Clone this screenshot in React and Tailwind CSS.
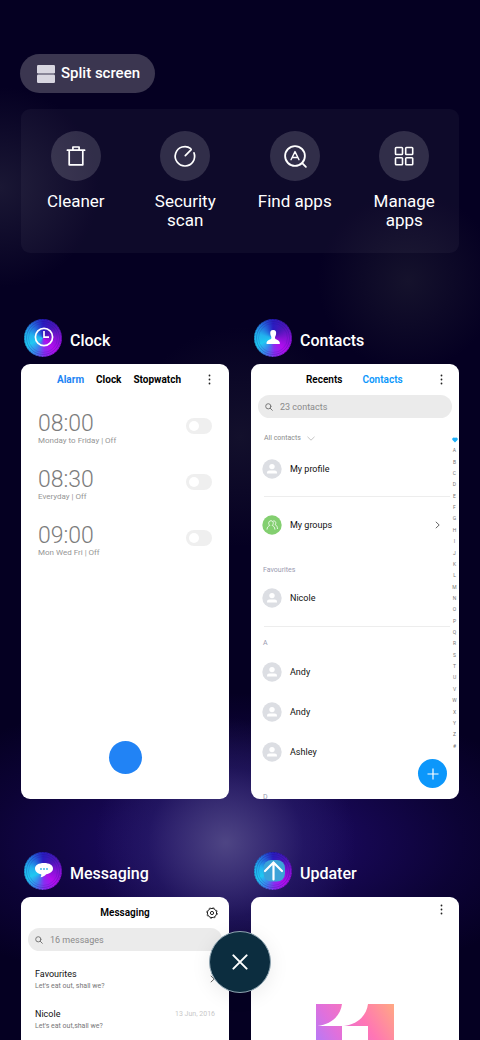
import React from 'react';

const INDEX = 'ABCDEFGHIJKLMNOPQRSTUVWXYZ#'.split('');

function Dots() {
  return (
    <svg viewBox="0 0 3 11" className="h-[11px] w-[3px] fill-[#222]">
      <circle cx="1.5" cy="1.5" r="0.9" />
      <circle cx="1.5" cy="5.5" r="0.9" />
      <circle cx="1.5" cy="9.5" r="0.9" />
    </svg>
  );
}

function TrashIcon() {
  return (
    <svg viewBox="0 0 24 24" className="size-6 fill-none stroke-white stroke-[1.7]" strokeLinejoin="round" strokeLinecap="round">
      <path d="M3.4 6.2H20.6M5.2 6.2V20.8H18.8V6.2M8.9 6V3H15.1V6" />
    </svg>
  );
}

function ScanIcon() {
  return (
    <svg viewBox="0 0 24 24" className="size-6 fill-none stroke-white stroke-[1.7]" strokeLinecap="round">
      <path d="M17.8 4.6A9.7 9.7 0 1 0 21 8.9M12.3 11.7L18.2 5.6" />
    </svg>
  );
}

function FindIcon() {
  return (
    <svg viewBox="0 0 24 24" className="size-6 overflow-visible fill-none stroke-white stroke-[1.8]" strokeLinecap="round" strokeLinejoin="round">
      <circle cx="12" cy="12" r="9.9" />
      <path d="M19.2 19.2L22.9 22.9" />
      <path d="M8 15.7L12 7.6L16 15.7M9.5 13.5H14.5" strokeWidth="1.4" />
    </svg>
  );
}

function GridIcon() {
  return (
    <svg viewBox="0 0 24 24" className="size-6 fill-none stroke-white stroke-[1.6]">
      <rect x="3.5" y="3.5" width="7" height="7" rx="0.8" />
      <rect x="13.7" y="3.5" width="7" height="7" rx="0.8" />
      <rect x="3.5" y="13.7" width="7" height="7" rx="0.8" />
      <rect x="13.7" y="13.7" width="7" height="7" rx="0.8" />
    </svg>
  );
}

function Tool({ icon, label }) {
  return (
    <button type="button" className="flex flex-col items-center px-2">
      <span className="flex size-[50px] items-center justify-center rounded-full bg-white/15">{icon}</span>
      <span className="mt-[11px] text-[17px] leading-[19px]">{label}</span>
    </button>
  );
}

function Badge({ children }) {
  return (
    <span className="flex size-[38px] shrink-0 items-center justify-center rounded-full bg-[conic-gradient(from_0deg,#2a1cc0,#4a16b8_45deg,#8412d4_90deg,#b00eee_135deg,#8a2cf0_175deg,#3f7eec_205deg,#1fc8f2_245deg,#22b0ee_285deg,#2464dc_325deg,#2a1cc0)]">
      <svg viewBox="0 0 38 38" className="size-[38px] fill-none">
        <circle cx="19" cy="19" r="18.5" stroke="#0a0440" strokeOpacity="0.3" strokeDasharray="2 1" />
        <circle cx="19" cy="19" r="16.5" stroke="#1a1080" strokeOpacity="0.25" />
        <circle cx="19" cy="19" r="14.5" stroke="#1a1080" strokeOpacity="0.15" />
        {children}
      </svg>
    </span>
  );
}

function AppWindow({ name, badge, children }) {
  return (
    <section className="min-w-0">
      <header className="flex items-center gap-2 pb-[7px] pl-[3px]">
        <Badge>{badge}</Badge>
        <h2 className="pt-[5px] text-base leading-5 font-medium">{name}</h2>
      </header>
      <div className="relative flex aspect-[208/435] flex-col overflow-hidden rounded-[9px] bg-white text-black">
        {children}
      </div>
    </section>
  );
}

function SearchField({ label }) {
  return (
    <label className="mx-[7px] flex h-[23px] shrink-0 items-center gap-[7px] rounded-full bg-[#ebebeb] px-[7px]">
      <svg viewBox="0 0 8 8" className="size-2 shrink-0 fill-none stroke-[#777]" strokeLinecap="round">
        <circle cx="3.3" cy="3.3" r="2.6" />
        <path d="M5.3 5.3L7.3 7.3" />
      </svg>
      <input type="text" aria-label={label} placeholder={label} className="w-full min-w-0 bg-transparent text-[9px] leading-3 outline-none placeholder:text-[#8a8a8a]" />
    </label>
  );
}

const ALARMS = [
  ['08:00', 'Monday to Friday | Off'],
  ['08:30', 'Everyday | Off'],
  ['09:00', 'Mon Wed Fri | Off'],
];

function ClockScreen() {
  return (
    <>
      <nav className="flex h-[31px] shrink-0 items-center pr-[18px] pl-9 text-[10px] font-bold">
        <button type="button" className="text-[#2183f5]">Alarm</button>
        <button type="button" className="ml-3">Clock</button>
        <button type="button" className="ml-3">Stopwatch</button>
        <button type="button" aria-label="More" className="ml-auto"><Dots /></button>
      </nav>
      <ul className="flex flex-col gap-[22px] px-[17px] pt-[17px]">
        {ALARMS.map(([time, info]) => (
          <li key={time} className="flex items-center justify-between">
            <div>
              <div className="text-[23px] leading-6 font-light text-[#7c7c7c]">{time}</div>
              <div className="text-[8px] leading-[10px] text-[#959595]">{info}</div>
            </div>
            <label className="mb-1.5 flex h-4 w-[26px] items-center rounded-full bg-[#efefef] px-[3px] has-checked:justify-end">
              <input type="checkbox" aria-label={time} className="size-[10px] appearance-none rounded-full bg-white" />
            </label>
          </li>
        ))}
      </ul>
      <button type="button" aria-label="Add alarm" className="mx-auto mt-auto mb-[25px] size-[33px] rounded-full bg-[#2183f5]" />
    </>
  );
}

function Avatar() {
  return (
    <svg viewBox="0 0 20 20" className="size-5 shrink-0">
      <circle cx="10" cy="10" r="9.7" fill="#dcdee3" />
      <circle cx="10" cy="7.6" r="2.7" fill="#fff" />
      <path d="M5 14.6V13.6Q5 11.4 7.2 11.4H12.8Q15 11.4 15 13.6V14.6Z" fill="#fff" />
    </svg>
  );
}

function Person({ name }) {
  return (
    <div className="flex h-5 items-center gap-2 pl-[11px]">
      <Avatar />
      <span className="text-[9px] leading-3 text-[#111]">{name}</span>
    </div>
  );
}

function ContactsScreen() {
  return (
    <>
      <nav className="flex h-[31px] shrink-0 items-center pr-4 pl-[55px] text-[10px] font-semibold">
        <button type="button">Recents</button>
        <button type="button" className="ml-5 text-[#0c97fb]">Contacts</button>
        <button type="button" aria-label="More" className="ml-auto"><Dots /></button>
      </nav>
      <SearchField label="23 contacts" />
      <div className="flex shrink-0">
        <div className="min-w-0 flex-1 pt-[15px]">
          <button type="button" className="flex items-center gap-1.5 pl-[13px] text-[7px] leading-[10px] text-[#8c8c8c]">
            All contacts
            <svg viewBox="0 0 8 5" className="h-[5px] w-2 fill-none stroke-[#aaa] stroke-[0.7]">
              <path d="M0.5 0.8L4 4.2L7.5 0.8" />
            </svg>
          </button>
          <div className="mt-4"><Person name="My profile" /></div>
          <hr className="mt-[17px] ml-[13px] border-[#ededed]" />
          <a href="#groups" className="mt-[18px] flex h-5 items-center gap-2 pr-[10px] pl-[11px]">
            <svg viewBox="0 0 20 20" className="size-5 shrink-0 fill-none">
              <circle cx="10" cy="10" r="9.7" fill="#83cf70" />
              <g stroke="#fff" strokeWidth="0.8" strokeLinecap="round" strokeLinejoin="round">
                <path d="M5 14.2C5.2 12 6.3 11.2 7.8 10.4C6.6 9.3 6.5 8 6.9 7C7.6 5.3 10.4 5.3 11.1 7C11.5 8 11.3 9.4 10.2 10.4C11.7 11.2 12.7 12 12.9 14.2" />
                <path d="M11.6 5.9C13.4 5.6 14.6 7.6 13.2 9.6C14.6 10.5 15.3 11.4 15.5 13.6" />
              </g>
            </svg>
            <span className="text-[9px] leading-3 text-[#111]">My groups</span>
            <svg viewBox="0 0 5 8" className="ml-auto h-2 w-[5px] fill-none stroke-[#666]">
              <path d="M0.8 0.8L4.2 4L0.8 7.2" />
            </svg>
          </a>
          <h3 className="mt-[30px] pl-3 text-[7px] leading-[10px] text-[#9a9ab0]">Favourites</h3>
          <div className="mt-[13px]"><Person name="Nicole" /></div>
          <hr className="mt-[18px] ml-[13px] border-[#ededed]" />
          <h3 className="mt-[11px] pl-3 text-[7px] leading-[10px] text-[#9a9ab0]">A</h3>
          <div className="mt-[14px] flex flex-col gap-5">
            <Person name="Andy" />
            <Person name="Andy" />
            <Person name="Ashley" />
          </div>
          <h3 className="mt-[30px] pl-3 text-[7px] leading-[10px] text-[#9a9ab0]">D</h3>
        </div>
        <div className="mt-4 flex h-[318px] w-[9px] flex-col text-center text-[5px] text-[#777]">
          <span className="flex flex-1 items-center justify-center">
            <svg viewBox="0 0 6 6" className="size-1.5 fill-[#1fb0fa]">
              <path d="M3 5.6L0.5 3C-0.4 1.6 1.2-0.3 3 1.1C4.8-0.3 6.4 1.6 5.5 3Z" />
            </svg>
          </span>
          {INDEX.map((c) => (
            <span key={c} className="flex flex-1 items-center justify-center">{c}</span>
          ))}
        </div>
      </div>
      <button type="button" aria-label="Add contact" className="absolute right-3 bottom-[11px] flex size-[29px] items-center justify-center rounded-full bg-[#0c97fb]">
        <svg viewBox="0 0 12 12" className="size-3 stroke-white stroke-[1.2]"><path d="M6 0.5V11.5M0.5 6H11.5" /></svg>
      </button>
    </>
  );
}

function MessagingScreen() {
  return (
    <>
      <div className="relative flex h-[31px] shrink-0 items-center justify-center">
        <h3 className="text-[10px] font-semibold">Messaging</h3>
        <button type="button" aria-label="Settings" className="absolute right-[11px]">
          <svg viewBox="0 0 12 12" className="size-3 fill-none stroke-[#222]">
            <circle cx="6" cy="6" r="4.6" strokeWidth="1" />
            <circle cx="6" cy="6" r="5.3" strokeWidth="0.8" strokeDasharray="2 2.16" />
            <circle cx="6" cy="6" r="1.6" strokeWidth="1" />
          </svg>
        </button>
      </div>
      <SearchField label="16 messages" />
      <ul className="flex flex-col gap-4 px-[14px] pt-4">
        <li className="flex items-center justify-between">
          <div>
            <div className="text-[9px] leading-[14px] text-[#111]">Favourites</div>
            <div className="text-[7px] leading-[10px] text-[#777]">Let's eat out, shall we?</div>
          </div>
          <svg viewBox="0 0 5 8" className="h-2 w-[5px] fill-none stroke-[#666]">
            <path d="M0.8 0.8L4.2 4L0.8 7.2" />
          </svg>
        </li>
        <li>
          <div className="flex items-center justify-between text-[9px] leading-[14px] text-[#111]">
            Nicole
            <time className="text-[7px] text-[#c8c8c8]">13 Jun, 2016</time>
          </div>
          <div className="text-[7px] leading-[10px] text-[#777]">Let's eat out,shall we?</div>
        </li>
      </ul>
    </>
  );
}

function UpdaterScreen() {
  return (
    <>
      <button type="button" aria-label="More" className="mt-[7px] mr-4 self-end"><Dots /></button>
      <svg viewBox="0 0 78 78" className="mx-auto mt-[89px] size-[78px] shrink-0">
        <defs>
          <linearGradient id="brand" gradientUnits="userSpaceOnUse" x1="0" y1="50" x2="80" y2="0">
            <stop offset="0" stopColor="#a97dff" />
            <stop offset="0.3" stopColor="#e070dc" />
            <stop offset="0.62" stopColor="#ff76b4" />
            <stop offset="1" stopColor="#ffab80" />
          </linearGradient>
        </defs>
        <path fill="url(#brand)" d="M0 0H26C24.5 12 15 20.5 1.5 22H26V78H0ZM52 0H78V78H52V22H28C41 20.5 50.5 12 52 0Z" />
      </svg>
    </>
  );
}

export default function App() {
  return (
    <div className="relative h-screen overflow-hidden bg-[#050022] bg-[radial-gradient(ellipse_130px_125px_at_47%_81%,#4e4584_0%,#443b7ccc_25%,#30286e66_60%,transparent_100%),radial-gradient(ellipse_340px_150px_at_47%_81%,#200c6c_0%,#1c0a62cc_35%,#16075266_70%,transparent_100%),radial-gradient(circle_90px_at_85%_27%,#15122c_0%,transparent_100%),radial-gradient(circle_100px_at_0%_18%,#1a1734_0%,transparent_100%),radial-gradient(circle_110px_at_50%_42%,#13102c_0%,transparent_100%)] font-['Roboto',sans-serif] text-white">
      <main className="flex flex-col px-[21px] pt-[54px]">
        <button type="button" className="-ml-px flex h-[39px] items-center gap-1.5 self-start rounded-full bg-[#3b3650] pr-[15px] pl-[17px] text-[15px] font-medium">
          <svg viewBox="0 0 18 18" className="size-[18px] fill-[#d8d6e0]">
            <rect width="18" height="8.4" rx="1.2" />
            <rect y="9.6" width="18" height="8.4" rx="1.2" />
          </svg>
          Split screen
        </button>
        <div className="mt-4 grid min-h-36 grid-cols-4 items-start rounded-[9px] bg-white/4 pt-[22px]">
          <Tool icon={<TrashIcon />} label="Cleaner" />
          <Tool icon={<ScanIcon />} label="Security scan" />
          <Tool icon={<FindIcon />} label="Find apps" />
          <Tool icon={<GridIcon />} label="Manage apps" />
        </div>
        <div className="mt-[66px] grid grid-cols-2 gap-x-[22px] gap-y-[53px]">
          <AppWindow
            name="Clock"
            badge={
              <g stroke="#fff" strokeWidth="1.7">
                <circle cx="20" cy="18" r="8.6" />
                <path d="M20 12V18.2H25" />
              </g>
            }
          >
            <ClockScreen />
          </AppWindow>
          <AppWindow
            name="Contacts"
            badge={<path fill="#fff" d="M19.2 11C21.8 11 22.6 13.1 22 15.5C21.7 16.9 21 17.5 21 18.9C21.2 20.9 25.8 20.5 26 24.3Q26 25.1 25.2 25.1H13.2Q12.4 25.1 12.4 24.3C12.6 20.5 17.2 20.9 17.4 18.9C17.4 17.5 16.7 16.9 16.4 15.5C15.8 13.1 16.6 11 19.2 11Z" />}
          >
            <ContactsScreen />
          </AppWindow>
          <AppWindow
            name="Messaging"
            badge={
              <>
                <path fill="#fff" d="M20 11C25.4 11 29 13.1 29 16.5C29 19.7 26 21.7 22.2 22.3C20.6 24.1 18.8 25.1 16.4 25.2C17.2 24.2 17.4 23.3 17.2 22.2C13.6 21.5 11 19.5 11 16.5C11 13.1 14.6 11 20 11Z" />
                <g fill="#2fb4e8">
                  <circle cx="17" cy="17" r="0.9" />
                  <circle cx="20" cy="17" r="0.9" />
                  <circle cx="23" cy="17" r="0.9" />
                </g>
              </>
            }
          >
            <MessagingScreen />
          </AppWindow>
          <AppWindow
            name="Updater"
            badge={
              <>
                <rect x="9.5" y="8" width="21.5" height="21.5" rx="8" fill="#3ba3d8" />
                <path d="M19.5 27.5V10.5M11 19L19.5 10.5L28 19" stroke="#fff" strokeWidth="2.2" strokeLinecap="round" />
              </>
            }
          >
            <UpdaterScreen />
          </AppWindow>
        </div>
      </main>
      <button type="button" aria-label="Close all" className="absolute bottom-[47px] left-1/2 flex size-[62px] -translate-x-1/2 items-center justify-center rounded-full border border-[#8fa5b2] bg-[#0c2d3f] shadow-[0_4px_20px_rgba(0,0,0,0.08)]">
        <svg viewBox="0 0 16 16" className="size-4 stroke-white stroke-2" strokeLinecap="round"><path d="M1.4 1.4L14.6 14.6M14.6 1.4L1.4 14.6" /></svg>
      </button>
    </div>
  );
}
